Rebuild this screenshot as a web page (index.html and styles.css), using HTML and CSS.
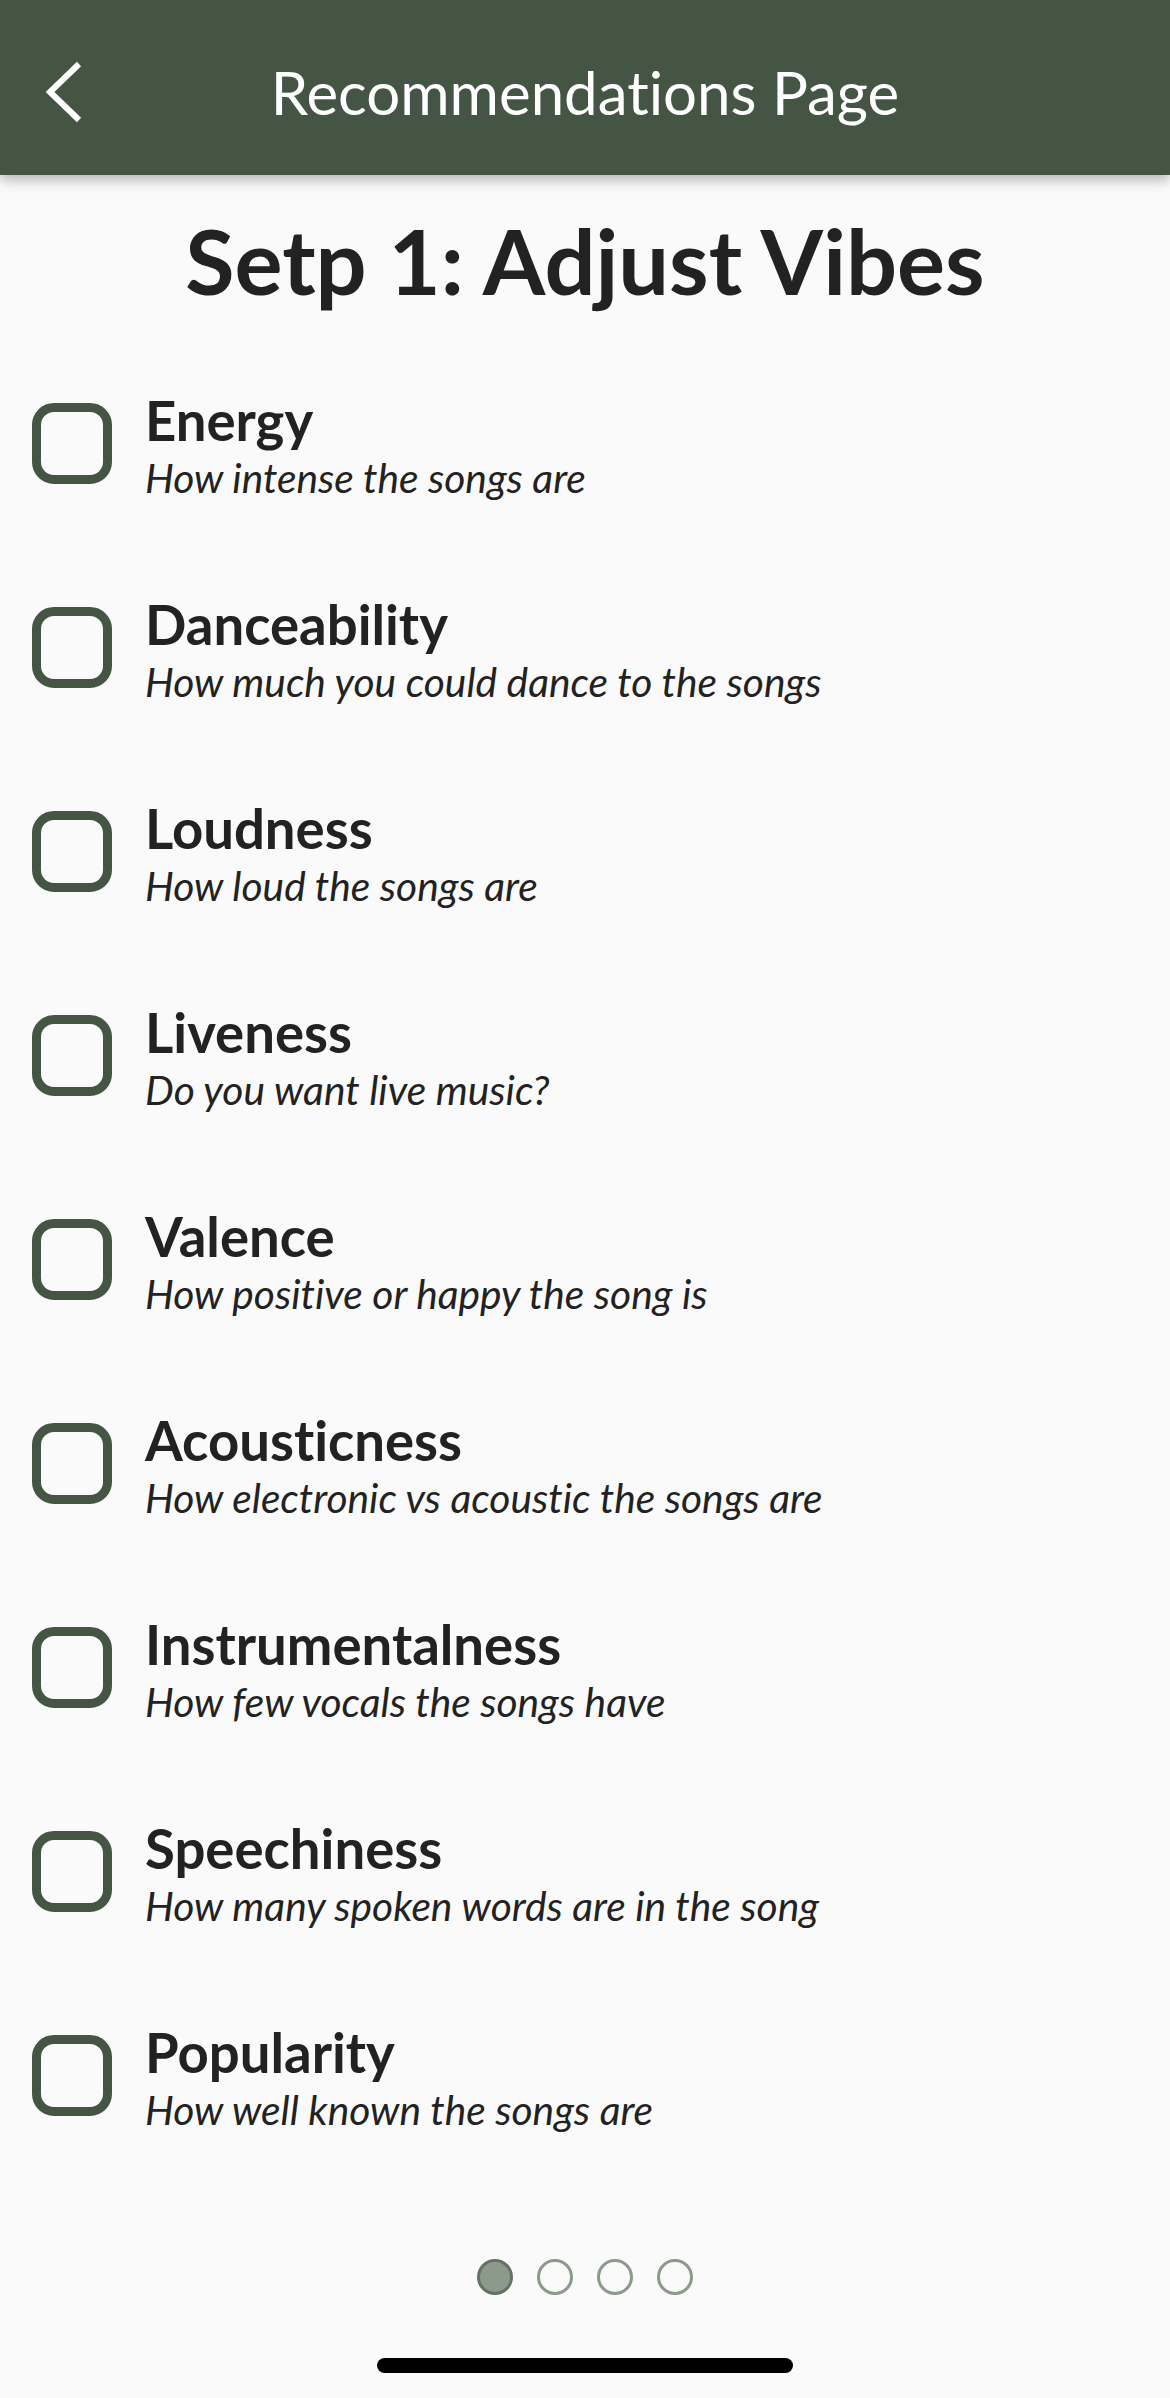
FILE: index.html
```html
<!DOCTYPE html>
<html lang="en">
<head>
<meta charset="utf-8">
<title>Recommendations Page</title>
<link rel="stylesheet" href="styles.css">
</head>
<body>
<div class="screen">
  <header class="topbar">
    <button class="back" aria-label="Back">
      <svg width="40" height="64" viewBox="0 0 40 64"><polyline points="34,4 5,32 34,60" fill="none" stroke="#ffffff" stroke-width="6" stroke-linecap="butt" stroke-linejoin="miter"/></svg>
    </button>
    <div class="topbar-title">Recommendations Page</div>
    <div class="spacer"></div>
  </header>

  <h1 class="step-title">Setp 1: Adjust Vibes</h1>

  <ul class="vibes">
    <li class="vibe"><span class="box"></span><div class="vibe-text"><div class="vibe-name">Energy</div><div class="vibe-desc">How intense the songs are</div></div></li>
    <li class="vibe"><span class="box"></span><div class="vibe-text"><div class="vibe-name">Danceability</div><div class="vibe-desc">How much you could dance to the songs</div></div></li>
    <li class="vibe"><span class="box"></span><div class="vibe-text"><div class="vibe-name">Loudness</div><div class="vibe-desc">How loud the songs are</div></div></li>
    <li class="vibe"><span class="box"></span><div class="vibe-text"><div class="vibe-name">Liveness</div><div class="vibe-desc">Do you want live music?</div></div></li>
    <li class="vibe"><span class="box"></span><div class="vibe-text"><div class="vibe-name">Valence</div><div class="vibe-desc">How positive or happy the song is</div></div></li>
    <li class="vibe"><span class="box"></span><div class="vibe-text"><div class="vibe-name">Acousticness</div><div class="vibe-desc">How electronic vs acoustic the songs are</div></div></li>
    <li class="vibe"><span class="box"></span><div class="vibe-text"><div class="vibe-name">Instrumentalness</div><div class="vibe-desc">How few vocals the songs have</div></div></li>
    <li class="vibe"><span class="box"></span><div class="vibe-text"><div class="vibe-name">Speechiness</div><div class="vibe-desc">How many spoken words are in the song</div></div></li>
    <li class="vibe"><span class="box"></span><div class="vibe-text"><div class="vibe-name">Popularity</div><div class="vibe-desc">How well known the songs are</div></div></li>
  </ul>

  <div class="pager">
    <span class="dot active"></span>
    <span class="dot"></span>
    <span class="dot"></span>
    <span class="dot"></span>
  </div>

  <div class="home-indicator"></div>
</div>
</body>
</html>
```

FILE: styles.css
```css
* { box-sizing: border-box; }

html, body {
  margin: 0;
  padding: 0;
  background: #fafafa;
}

body {
  font-family: Lato, "Noto Sans", "Liberation Sans", sans-serif;
  color: #222222;
  font-variant-ligatures: none;
  font-feature-settings: "liga" 0, "clig" 0, "dlig" 0;
}

.screen {
  width: 1170px;
  height: 2398px;
  display: flex;
  flex-direction: column;
  background: #fafafa;
  overflow: hidden;
}

.topbar {
  height: 175px;
  flex: none;
  background: #445544;
  display: grid;
  grid-template-columns: 1fr auto 1fr;
  align-items: center;
  box-shadow: 0 5px 12px rgba(0, 0, 0, 0.28);
  position: relative;
  z-index: 1;
}

.back {
  justify-self: start;
  margin-left: 45px;
  padding: 0;
  border: 0;
  background: none;
  width: 40px;
  height: 64px;
  display: flex;
  margin-top: 8px;
}

.topbar-title {
  color: #ffffff;
  font-size: 60px;
  font-weight: 400;
  line-height: 1.2;
  margin-top: 8px;
}

.step-title {
  margin: 31px 0 0;
  text-align: center;
  font-size: 90px;
  font-weight: 700;
  line-height: 1.2;
  color: #222222;
}

.vibes {
  list-style: none;
  margin: 74px 0 0;
  padding: 0;
}

.vibe {
  height: 204px;
  display: flex;
  align-items: flex-start;
  padding-left: 32px;
}

.box {
  flex: none;
  width: 80px;
  height: 81px;
  margin-top: 15px;
  border: 9.5px solid #445544;
  border-radius: 22px;
}

.vibe-text {
  margin-left: 33px;
}

.vibe-name {
  font-size: 54.5px;
  font-weight: 700;
  line-height: 1.18;
}

.vibe-desc {
  font-size: 40.7px;
  font-style: italic;
  font-weight: 400;
  line-height: 52px;
}

.pager {
  margin-top: 35px;
  display: flex;
  justify-content: center;
  gap: 24px;
}

.dot {
  width: 36px;
  height: 36px;
  border-radius: 50%;
  border: 3px solid #8c9a8c;
}

.dot.active {
  background: #8c9a8c;
  border-color: #637363;
}

.home-indicator {
  margin: 63px auto 0;
  width: 416px;
  height: 15px;
  border-radius: 8px;
  background: #000000;
}
```
